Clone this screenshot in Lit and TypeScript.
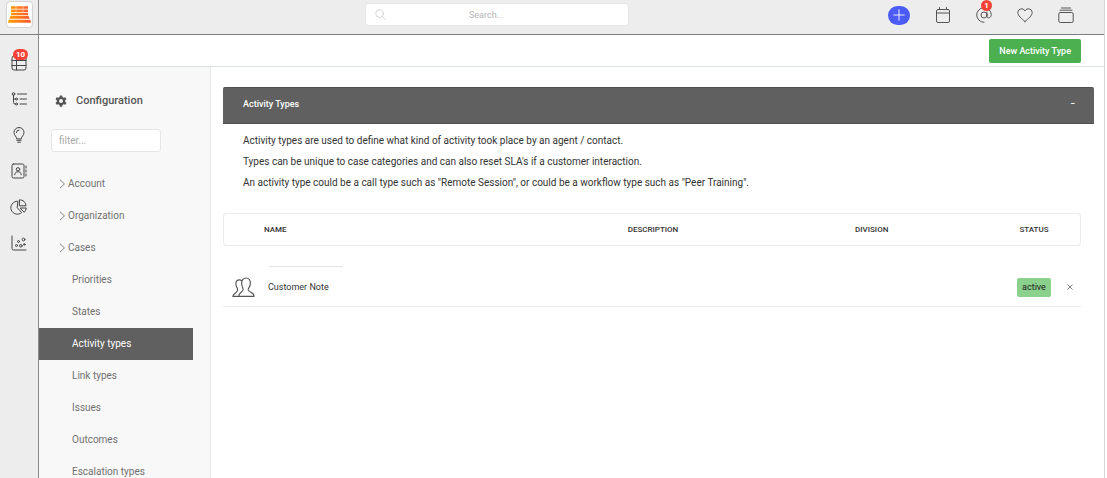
import { LitElement, html, css, svg } from "lit";
import { customElement, property, state } from "lit/decorators.js";
import { classMap } from "lit/directives/class-map.js";

const glyphs: Record<string, unknown> = {
  table: svg`<rect x="1" y="1" width="14" height="14" rx="2"/><path d="M1 5.500h14M1 10.500h14M5.500 1v14"/>`,
  tree: svg`<path d="M6.500 3H15.500M9 8h6.500M9 13h6.500M2.500 4v7.500a1.500 1.500 0 0 0 1.500 1.500h.5M2.500 8h2"/><circle cx="2.500" cy="3" r="1.300"/><circle cx="5.500" cy="8" r="1"/><circle cx="5.500" cy="13" r="1"/>`,
  bulb: svg`<path d="M5.700 11.500c0-2-2.700-3-2.700-6a5 5 0 0 1 10 0c0 3-2.700 4-2.700 6zM5.800 13.300h4.400M6.600 15.200h2.800M5.400 5.500A2.600 2.600 0 0 1 8 3"/>`,
  contact: svg`<rect x="1" y="1" width="12" height="14" rx="1.500"/><circle cx="7" cy="6.300" r="1.700"/><path d="M3.800 11.700c0-2 1.400-3 3.200-3s3.200 1 3.200 3"/><path d="M15 3v2M15 7v2M15 11v2"/>`,
  pie: svg`<path d="M6.500 2.200a6.500 6.500 0 1 0 4.200 11.300L6.500 9z"/><path d="M8.800.8a6 6 0 0 1 6.200 6H8.800zM9.500 9h5.700a5.500 5.500 0 0 1-1.700 4z"/>`,
  scatter: svg`<path d="M1 1v12.500A1.500 1.500 0 0 0 2.500 15H15"/><circle cx="5.500" cy="10.500" r="1"/><circle cx="7.500" cy="6.500" r="1"/><circle cx="9.800" cy="10.800" r="1.300"/><circle cx="12.500" cy="4.500" r="1.400"/><circle cx="13.300" cy="9.500" r=".8"/>`,
  calendar: svg`<rect x="1.500" y="2.500" width="13" height="13" rx="1.500"/><path d="M1.500 6h13M4.500.5v2M11.500.5v2"/>`,
  at: svg`<circle cx="8" cy="8" r="3"/><path d="M11 5v4.200c0 2.600 4.300 2.300 4.300-1.700A7.300 7.300 0 1 0 8 15.300"/>`,
  heart: svg`<path d="M8 14.500C4.500 11.500.8 8.800.8 5.400A3.800 3.800 0 0 1 8 3.900a3.800 3.800 0 0 1 7.200 1.500c0 3.400-3.700 6.100-7.200 9.100z"/>`,
  stack: svg`<rect x=".8" y="5.500" width="14.400" height="10" rx="1.500"/><path d="M2 3.200h12M3.500 1h9"/>`,
  search: svg`<circle cx="6.700" cy="6.700" r="5.600"/><path d="M10.700 10.700l4.800 4.800"/>`,
  plus: svg`<path d="M8 2v12M2 8h12"/>`,
  close: svg`<path stroke-width="2" d="M2 2l12 12M14 2L2 14"/>`,
  chevron: svg`<path stroke-width="1.500" d="M4 0l7.500 7L4 14"/>`,
  gear: svg`<path fill="currentColor" stroke="none" fill-rule="evenodd" d="M6.500.5h3l.5 2.200 1.600.9 2.200-.7 1.500 2.600-1.700 1.600v1.800l1.700 1.600-1.500 2.600-2.200-.7-1.600.9-.5 2.200h-3L6 13.300l-1.600-.9-2.200.7-1.500-2.600 1.700-1.600V7.100L.7 5.500l1.500-2.600 2.200.7L6 2.700zM8 5.400a2.600 2.600 0 1 0 0 5.200 2.600 2.600 0 0 0 0-5.200z"/>`,
  people: svg`<g stroke-width=".8"><path d="M6.700 3.200C6.200 2.800 5.700 2.700 5.200 2.700c-1.700 0-2.500 1.100-2.500 2.800 0 2 1.300 2.700 1.200 4.200C3.800 11.900.6 12 .6 14.200h4"/><path d="M4.800 14.200h10.500c.3-3-3.500-2.600-4-4.500-.3-1.300 1.500-2 1.500-4.600 0-2.200-1.100-3.700-3-3.700s-3.100 1.500-3.100 3.700c0 2.600 1.300 3.300 1 4.600-.5 1.900-3.200 1.500-2.900 4.500z"/></g>`,
};

@customElement("ui-icon")
export class UiIcon extends LitElement {
  @property() name = "";

  static styles = css`
    :host {
      display: inline-flex;
      flex: none;
      width: 16px;
      height: 16px;
    }
    .glyph {
      width: 100%;
      height: 100%;
      fill: none;
      stroke: currentColor;
      stroke-linecap: round;
      stroke-linejoin: round;
      overflow: visible;
    }
  `;

  render() {
    return html`<svg class="glyph" viewBox="0 0 16 16" aria-hidden="true">${glyphs[this.name]}</svg>`;
  }
}

@customElement("app-root")
export class AppRoot extends LitElement {
  @state() private expanded = true;
  @state() private selected = "Activity types";

  private rail = [
    { icon: "table", label: "Cases", badge: 10 },
    { icon: "tree", label: "Structure" },
    { icon: "bulb", label: "Ideas" },
    { icon: "contact", label: "Contacts" },
    { icon: "pie", label: "Reports" },
    { icon: "scatter", label: "Analytics" },
  ];

  private tools = [
    { icon: "calendar", label: "Calendar" },
    { icon: "at", label: "Mentions", badge: 1 },
    { icon: "heart", label: "Favourites" },
    { icon: "stack", label: "Collections" },
  ];

  private groups = ["Account", "Organization", "Cases"];
  private caseItems = ["Priorities", "States", "Activity types", "Link types", "Issues", "Outcomes", "Escalation types"];

  static styles = css`
    :host {
      display: block;
      font: 10px/20px Roboto, sans-serif;
      color: #333;
      background: #fff;
    }
    *, *::before {
      box-sizing: border-box;
    }
    button, input {
      font: inherit;
      color: inherit;
      margin: 0;
      padding: 0;
      border: 0;
      background: none;
    }
    button {
      cursor: pointer;
    }
    a {
      color: inherit;
      text-decoration: none;
    }
    .app {
      display: flex;
      flex-direction: column;
      height: 100vh;
      overflow: hidden;
      margin-right: 2px;
      border-right: 1px solid #d6d6d6;
    }
    .topbar {
      flex: none;
      display: grid;
      grid-template-columns: 39px 11fr auto 16fr;
      align-items: stretch;
      height: 35px;
      margin-right: -1px;
      background: #ededed;
      border-bottom: 1px solid #7c7c7c;
      border-right: 1px solid #8c8c8c;
    }
    .brand {
      display: flex;
      justify-content: center;
      align-items: flex-start;
      padding-top: 1px;
      border-right: 1px solid #8c8c8c;
    }
    .logo {
      display: block;
      width: 27px;
      height: 27px;
      background: #fff;
      border: 1px solid #d4d4d4;
      border-radius: 4px;
    }
    .search {
      grid-column: 3;
      align-self: start;
      display: grid;
      grid-template-columns: 28px 1fr 50px;
      align-items: center;
      justify-items: center;
      width: 264px;
      height: 23px;
      margin-top: 3px;
      background: #fff;
      border: 1px solid #e6e6e6;
      border-radius: 3px;
      color: #c4c4c4;
    }
    .search ui-icon {
      width: 11px;
      height: 11px;
    }
    .search input {
      width: 100%;
      padding-left: 10px;
      font-size: 9px;
      text-align: center;
      outline: none;
      appearance: none;
    }
    .search input::placeholder {
      color: #b4b4b4;
      opacity: 1;
    }
    .tools {
      display: flex;
      justify-content: flex-end;
      align-items: center;
      gap: 25px;
      padding: 0 30px 4px 0;
      color: #555;
    }
    .tool {
      position: relative;
      display: flex;
    }
    .add {
      display: flex;
      align-items: center;
      justify-content: center;
      width: 22px;
      height: 19px;
      border-radius: 10px;
      background: #4a5cf5;
      color: #fff;
    }
    .add ui-icon {
      width: 14px;
      height: 14px;
    }
    .badge {
      position: absolute;
      min-width: 11px;
      padding: 0 3px;
      border-radius: 6px;
      background: #f44336;
      color: #fff;
      font-size: 8px;
      font-weight: 700;
      line-height: 11px;
      text-align: center;
    }
    .tool .badge {
      left: 5px;
      bottom: 12px;
    }
    .rail .badge {
      left: 2px;
      bottom: 11px;
    }
    .body {
      flex: 1;
      min-height: 0;
      display: flex;
    }
    .rail {
      flex: none;
      width: 39px;
      display: flex;
      flex-direction: column;
      align-items: center;
      gap: 20px;
      padding-top: 20px;
      background: #ededed;
      border-right: 1px solid #8c8c8c;
      color: #444;
    }
    .rail-item {
      position: relative;
      display: flex;
    }
    .page {
      flex: 1;
      min-width: 0;
      display: flex;
      flex-direction: column;
    }
    .actions {
      flex: none;
      display: flex;
      justify-content: flex-end;
      padding: 4px 23px 3px;
      border-bottom: 1px solid #dbe3e1;
    }
    .primary {
      height: 24px;
      padding: 0 10px;
      border-radius: 2px;
      background: #4caf50;
      color: #fff;
      font-size: 9px;
      font-weight: 500;
      white-space: nowrap;
    }
    .columns {
      flex: 1;
      min-height: 0;
      display: flex;
    }
    .config {
      flex: none;
      width: 172px;
      overflow: hidden;
      padding-top: 24px;
      background: #f8f8f8;
      border-right: 1px solid #e9e9e9;
    }
    .config-title {
      display: flex;
      align-items: center;
      gap: 9px;
      margin: 0 0 18px 16px;
      font-size: 11px;
      font-weight: 500;
      line-height: 20px;
      color: #555;
    }
    .config-title ui-icon {
      width: 12px;
      height: 12px;
    }
    .filter {
      display: block;
      width: 110px;
      height: 23px;
      margin-left: 12px;
      padding: 0 7px;
      background: #fff;
      border: 1px solid #e6e6e6;
      border-radius: 3px;
    }
    .filter::placeholder {
      color: #aaa;
      opacity: 1;
    }
    .tree {
      list-style: none;
      margin: 16px 0 0;
      padding: 0;
      color: #707070;
    }
    .group, .leaf {
      display: flex;
      align-items: center;
      height: 32px;
    }
    .group {
      gap: 1px;
      padding-left: 19px;
    }
    .group ui-icon {
      width: 9px;
      height: 9px;
    }
    .leaf {
      margin-right: 17px;
      padding-left: 33px;
    }
    .leaf.active {
      background: #606060;
      color: #fff;
    }
    .content {
      flex: 1;
      min-width: 0;
      overflow: hidden;
      padding: 20px 10px 0 12px;
    }
    .panel-head {
      display: flex;
      align-items: center;
      justify-content: space-between;
      width: 100%;
      height: 37px;
      margin: 0;
      padding: 0 19px 4px 20px;
      border: 1px solid #505050;
      border-width: 1px 0;
      border-radius: 2px 2px 0 0;
      background: #606060;
      color: #fff;
      font-size: 9px;
      font-weight: 500;
    }
    .intro {
      padding: 6px 20px 0;
    }
    .intro p {
      margin: 0;
      line-height: 21px;
    }
    .types {
      width: calc(100% - 13px);
      margin-top: 20px;
      table-layout: fixed;
      border-collapse: separate;
      border-spacing: 0;
    }
    .c-icon { width: 41px; }
    .c-desc { width: 19%; }
    .c-div { width: 32%; }
    .c-status { width: 50px; }
    .c-remove { width: 22px; }
    .types th {
      height: 33px;
      padding: 0;
      border: solid #ebebeb;
      border-width: 1px 0;
      font-size: 8px;
      font-weight: 500;
      line-height: 20px;
      text-align: center;
    }
    .types th:first-child {
      border-left-width: 1px;
      border-radius: 4px 0 0 4px;
    }
    .types th:last-child {
      border-right-width: 1px;
      border-radius: 0 4px 4px 0;
    }
    .types .left {
      text-align: left;
    }
    .types td {
      height: 61px;
      padding: 0 0 9px;
      border-bottom: 1px solid #ececec;
      vertical-align: bottom;
      text-align: center;
      font-size: 9px;
      color: #333;
    }
    .types .name {
      padding-left: 4px;
      text-align: left;
    }
    .name::before {
      content: "";
      display: block;
      width: 74px;
      height: 1px;
      margin: 0 0 10px 1px;
      background: #e4e4e4;
    }
    .cell {
      display: flex;
      align-items: center;
      justify-content: center;
      height: 20px;
    }
    .cell ui-icon {
      width: 23px;
      height: 23px;
      color: #555;
    }
    .pill {
      padding: 0 5px;
      border-radius: 2px;
      background: #89d18c;
      color: #222;
      line-height: 19px;
    }
    .cell .remove ui-icon {
      width: 6px;
      height: 6px;
    }
    .remove {
      display: flex;
    }
    .hidden {
      display: none;
    }
  `;

  render() {
    return html`
      <div class="app">
        <header class="topbar">
          <a class="brand" href="#" aria-label="Home">
            <svg class="logo" viewBox="0 0 25 25" aria-hidden="true">
              <defs>
                <linearGradient id="glow"><stop offset="0" stop-color="#ffa000" /><stop offset="1" stop-color="#ff5638" /></linearGradient>
              </defs>
              <path fill="url(#glow)" d="M4 4.200h17v2.600H4zM4 7.600h17v2.600H4zM4 11h17v2.200H4zM3.500 14h18l1.200 2.700H2.300zM1.800 17.700h21.400l.8 3.100H1z" />
              <path stroke="#fff" stroke-width=".6" opacity=".7" d="M9 4v3M16 4v3M9 7.600v3M16 7.600v3" />
            </svg>
          </a>
          <label class="search">
            <ui-icon name="search"></ui-icon>
            <input type="search" placeholder="Search..." aria-label="Search" />
          </label>
          <div class="tools">
            <button class="add" aria-label="Add"><ui-icon name="plus"></ui-icon></button>
            ${this.tools.map(
              (t) => html`<button class="tool" aria-label=${t.label}>
                <ui-icon name=${t.icon}></ui-icon>${t.badge ? html`<span class="badge">${t.badge}</span>` : ""}
              </button>`
            )}
          </div>
        </header>
        <div class="body">
          <nav class="rail" aria-label="Main">
            ${this.rail.map(
              (r) => html`<a class="rail-item" href="#" aria-label=${r.label}>
                <ui-icon name=${r.icon}></ui-icon>${r.badge ? html`<span class="badge">${r.badge}</span>` : ""}
              </a>`
            )}
          </nav>
          <div class="page">
            <div class="actions"><button class="primary">New Activity Type</button></div>
            <div class="columns">
              <aside class="config">
                <h2 class="config-title"><ui-icon name="gear"></ui-icon>Configuration</h2>
                <input class="filter" type="text" placeholder="filter..." aria-label="Filter" />
                <ul class="tree">
                  ${this.groups.map(
                    (g) => html`<li><a class="group" href="#"><ui-icon name="chevron"></ui-icon>${g}</a></li>`
                  )}
                  ${this.caseItems.map(
                    (c) => html`<li>
                      <a
                        class=${classMap({ leaf: true, active: c === this.selected })}
                        href="#"
                        @click=${() => (this.selected = c)}
                        >${c}</a
                      >
                    </li>`
                  )}
                </ul>
              </aside>
              <main class="content">
                <button
                  class="panel-head"
                  aria-expanded=${this.expanded}
                  @click=${() => (this.expanded = !this.expanded)}
                >
                  <span>Activity Types</span><span>${this.expanded ? "−" : "+"}</span>
                </button>
                <div class=${classMap({ intro: true, hidden: !this.expanded })}>
                  <p>Activity types are used to define what kind of activity took place by an agent / contact.</p>
                  <p>Types can be unique to case categories and can also reset SLA's if a customer interaction.</p>
                  <p>An activity type could be a call type such as "Remote Session", or could be a workflow type such as "Peer Training".</p>
                </div>
                <table class="types">
                  <thead>
                    <tr>
                      <th class="c-icon"></th>
                      <th class="left">NAME</th>
                      <th class="c-desc">DESCRIPTION</th>
                      <th class="c-div">DIVISION</th>
                      <th class="c-status">STATUS</th>
                      <th class="c-remove"></th>
                    </tr>
                  </thead>
                  <tbody>
                    <tr>
                      <td><div class="cell"><ui-icon name="people"></ui-icon></div></td>
                      <td class="name">Customer Note</td>
                      <td></td>
                      <td></td>
                      <td><div class="cell"><span class="pill">active</span></div></td>
                      <td>
                        <div class="cell"><button class="remove" aria-label="Remove"><ui-icon name="close"></ui-icon></button></div>
                      </td>
                    </tr>
                  </tbody>
                </table>
              </main>
            </div>
          </div>
        </div>
      </div>
    `;
  }
}
